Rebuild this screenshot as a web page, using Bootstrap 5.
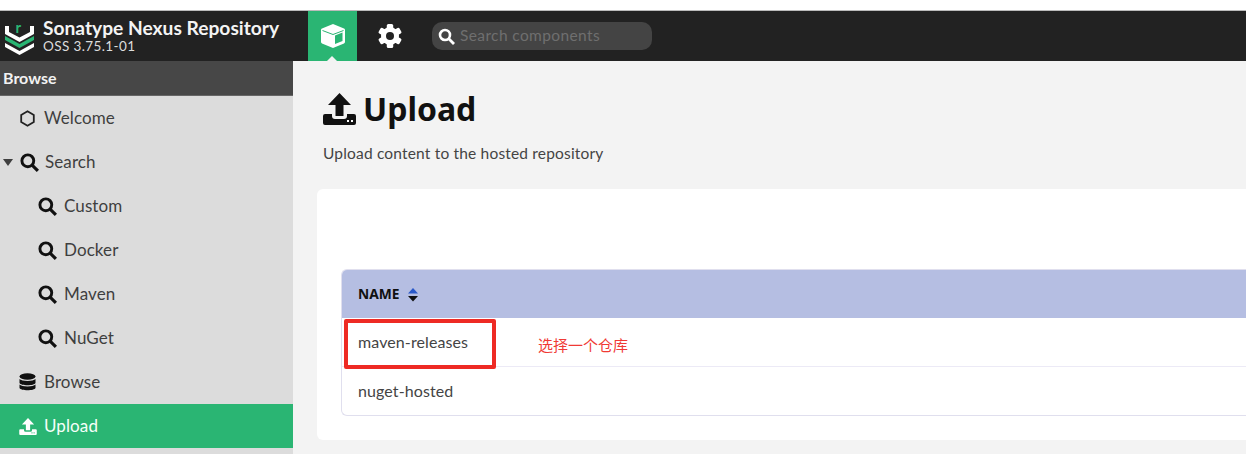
<!doctype html>
<html lang="en">
<head>
<meta charset="utf-8">
<title>Upload</title>
<link rel="stylesheet" href="https://cdn.jsdelivr.net/npm/bootstrap@5.3.0/dist/css/bootstrap.min.css">
<style>
html,body{height:100%;overflow:hidden}
body{background:#fff;font-family:"Lato","Liberation Sans","Noto Sans CJK SC",sans-serif;color:#3f3f3f}
.nx-shell{height:454px;padding-top:10px}
.nx-top{height:51px;background:#222;border-top:1px solid #bbb;color:#fff}
.nx-brand{width:308px;padding-left:5px;gap:9px}
.nx-brand-t{font-size:19.2px;font-weight:700;line-height:20px;color:#f4f4f4}
.nx-brand-s{font-size:13.5px;line-height:16px;letter-spacing:.4px;color:#ddd}
.nx-tab{width:49px;height:50px;background:#2ab573;position:relative}
.nx-tab::after{content:"";position:absolute;left:19px;bottom:0;border:5px solid transparent;border-top:0;border-bottom-color:#f3f3f3}
.nx-gear{width:65px;height:50px}
.nx-search{width:220px;height:28px;background:#444;border-radius:10px;margin-left:10px;padding-left:6px;gap:5px;color:#6f6f6f;font-size:15.5px;letter-spacing:.38px}
.nx-main{height:393px}
.nx-side{width:293px;background:#dcdcdc;flex:none}
.nx-side-h{height:35px;background:#474747;color:#f2f2f2;font-weight:700;font-size:16px;padding-left:3px;border-bottom:1px solid #666}
.nx-item{height:44px;font-size:17px;color:#3f3f3f;letter-spacing:.1px;gap:7px}
.nx-l1{padding-left:19px;gap:8px}
.nx-l1c{padding-left:3px}
.nx-l2{padding-left:38px}
.nx-on{background:#2ab573;color:#f6fff9;gap:7px}
.nx-caret{width:0;height:0;border:5px solid transparent;border-top:7px solid #3f3f3f;border-bottom:0}
.nx-gap6{margin-left:-1px}
.nx-content{background:#f3f3f3;min-width:0}
.nx-head{padding:28px 0 0 30px;height:128px}
.nx-h1{font-family:"Noto Sans","Open Sans",sans-serif;font-weight:700;font-size:32px;line-height:40px;color:#111;margin:0;gap:7px}
.nx-sub{font-size:15.5px;color:#444;margin-top:14px;line-height:20px;letter-spacing:.18px}
.nx-panel{background:#fff;margin-left:24px;height:251px;border-radius:6px 0 0 6px;padding:80px 0 0 24px}
.nx-table{border:1px solid #e0dfee;border-right:0;border-radius:6px 0 0 6px;overflow:hidden;height:147px}
.nx-th{height:48px;background:#b5bee2;padding:1px 0 0 16px;gap:8px;font-family:"Noto Sans",sans-serif;font-weight:700;font-size:13.8px;color:#111}
.nx-row{height:49px;padding-left:16px;font-size:16px;color:#444;letter-spacing:.1px;border-bottom:1px solid #eceaf6}
.nx-row:last-child{border-bottom:0;height:48px}
.nx-wrap{position:relative}
.nx-mark{position:absolute;left:51px;top:258px;width:152px;height:50px;border:4px solid #ee2a24;border-radius:2px}
.nx-note{position:absolute;left:245px;top:274px;font-family:"Noto Sans CJK SC",sans-serif;font-size:15px;line-height:20px;color:#f03a35}
</style>
</head>
<body>
<div class="nx-shell d-flex flex-column">
  <header class="nx-top d-flex align-items-center flex-shrink-0">
    <div class="nx-brand d-flex align-items-center">
      <svg width="29" height="38" viewBox="0 -8 29 38" aria-hidden="true"><text x="10.500" y="8" font-family="Lato,sans-serif" font-size="15" font-weight="700" fill="#2ab573">r</text><path d="M0 1h4v6l10.500 5.500L25 7V1h4v8l-14.500 8L0 9z" fill="#fff"/><path d="M0 11l14.500 8L29 11v4l-14.500 8L0 15z" fill="#2ab573"/><path d="M0 18l14.500 8L29 18v4l-14.500 8L0 22z" fill="#fff"/></svg>
      <div>
        <div class="nx-brand-t">Sonatype Nexus Repository</div>
        <div class="nx-brand-s">OSS 3.75.1-01</div>
      </div>
    </div>
    <div class="nx-tab d-flex align-items-center justify-content-center">
      <svg width="26" height="26" viewBox="0 0 26 26" aria-hidden="true"><path d="M13 1l11 4.500a1.500 1.500 0 0 1 1 1.400V19a1.500 1.500 0 0 1-1 1.400L13 25 2 20.400A1.500 1.500 0 0 1 1 19V6.900a1.500 1.500 0 0 1 1-1.400z" fill="#fff"/><path d="M15 12.500l7.500-3v8.500L15 21z" fill="#2ab573"/><path d="M2.500 7.500L13 11.500 23.500 7.500" fill="none" stroke="#2ab573" stroke-width="1"/></svg>
    </div>
    <div class="nx-gear d-flex align-items-center justify-content-center">
      <svg width="24" height="24" viewBox="-12 -12 24 24" aria-hidden="true"><circle r="9" fill="#fff"/><rect x="-3.200" y="-12" width="6.400" height="24" rx="1.500" fill="#fff"/><rect x="-3.200" y="-12" width="6.400" height="24" rx="1.500" fill="#fff" transform="rotate(60)"/><rect x="-3.200" y="-12" width="6.400" height="24" rx="1.500" fill="#fff" transform="rotate(120)"/><circle r="4" fill="#222"/></svg>
    </div>
    <div class="nx-search d-flex align-items-center">
      <svg width="17" height="17" viewBox="0 0 17 17" aria-hidden="true"><circle cx="7" cy="7" r="5" fill="none" stroke="#fff" stroke-width="2.600"/><path d="M10.800 10.800L16 16" stroke="#fff" stroke-width="2.800"/></svg>
      <span>Search components</span>
    </div>
  </header>
  <div class="nx-main d-flex">
    <aside class="nx-side d-flex flex-column">
      <div class="nx-side-h d-flex align-items-center">Browse</div>
      <div class="nx-item nx-l1 d-flex align-items-center"><svg width="17" height="17" viewBox="0 0 17 17" aria-hidden="true"><path d="M8.500 1.300l6.300 3.600v7.200l-6.300 3.600-6.300-3.600V4.900z" fill="none" stroke="#222" stroke-width="1.800"/></svg>Welcome</div>
      <div class="nx-item nx-l1c d-flex align-items-center"><span class="nx-caret"></span><svg width="19" height="19" viewBox="0 0 17 17" aria-hidden="true"><circle cx="7" cy="7" r="5.300" fill="none" stroke="#111" stroke-width="2.600"/><path d="M10.800 10.800L16 16" stroke="#111" stroke-width="2.800"/></svg><span class="nx-gap6">Search</span></div>
      <div class="nx-item nx-l2 d-flex align-items-center"><svg width="19" height="19" viewBox="0 0 17 17" aria-hidden="true"><circle cx="7" cy="7" r="5.300" fill="none" stroke="#111" stroke-width="2.600"/><path d="M10.800 10.800L16 16" stroke="#111" stroke-width="2.800"/></svg>Custom</div>
      <div class="nx-item nx-l2 d-flex align-items-center"><svg width="19" height="19" viewBox="0 0 17 17" aria-hidden="true"><circle cx="7" cy="7" r="5.300" fill="none" stroke="#111" stroke-width="2.600"/><path d="M10.800 10.800L16 16" stroke="#111" stroke-width="2.800"/></svg>Docker</div>
      <div class="nx-item nx-l2 d-flex align-items-center"><svg width="19" height="19" viewBox="0 0 17 17" aria-hidden="true"><circle cx="7" cy="7" r="5.300" fill="none" stroke="#111" stroke-width="2.600"/><path d="M10.800 10.800L16 16" stroke="#111" stroke-width="2.800"/></svg>Maven</div>
      <div class="nx-item nx-l2 d-flex align-items-center"><svg width="19" height="19" viewBox="0 0 17 17" aria-hidden="true"><circle cx="7" cy="7" r="5.300" fill="none" stroke="#111" stroke-width="2.600"/><path d="M10.800 10.800L16 16" stroke="#111" stroke-width="2.800"/></svg>NuGet</div>
      <div class="nx-item nx-l1 d-flex align-items-center"><svg width="17" height="18" viewBox="0 0 17 18" aria-hidden="true"><ellipse cx="8.500" cy="3.500" rx="8" ry="3.300" fill="#111"/><path d="M.5 6c2 2.500 14 2.500 16 0v4c-1 3-15 3-16 0zM.5 11.500c2 2.500 14 2.500 16 0V15c-1 3-15 3-16 0z" fill="#111"/></svg>Browse</div>
      <div class="nx-item nx-l1 nx-on d-flex align-items-center"><svg width="18" height="17" viewBox="0 0 33 32" aria-hidden="true"><path d="M16.500 0L28 12h-7.500v11h-8V12H5zM0 23a2 2 0 0 1 2-2h7v2a3 3 0 0 0 3 3h9a3 3 0 0 0 3-3v-2h7a2 2 0 0 1 2 2v7a2 2 0 0 1-2 2H2a2 2 0 0 1-2-2z" fill="#fff"/><rect x="23" y="27" width="2" height="2" fill="#2ab573"/><rect x="27" y="27" width="2" height="2" fill="#2ab573"/></svg>Upload</div>
    </aside>
    <main class="nx-content flex-grow-1 nx-wrap">
      <div class="nx-head">
        <h1 class="nx-h1 d-flex align-items-center"><svg width="33" height="32" viewBox="0 0 33 32" aria-hidden="true"><path d="M16.500 0L28 12h-7.500v11h-8V12H5zM0 23a2 2 0 0 1 2-2h7v2a3 3 0 0 0 3 3h9a3 3 0 0 0 3-3v-2h7a2 2 0 0 1 2 2v7a2 2 0 0 1-2 2H2a2 2 0 0 1-2-2z" fill="#111"/><rect x="24" y="27" width="2" height="2" fill="#fff"/><rect x="28" y="27" width="2" height="2" fill="#fff"/></svg>Upload</h1>
        <p class="nx-sub mb-0">Upload content to the hosted repository</p>
      </div>
      <section class="nx-panel">
        <div class="nx-table">
          <div class="nx-th d-flex align-items-center">NAME
            <svg width="10" height="14" viewBox="0 0 10 14" aria-hidden="true"><path d="M5 0l5 5.500H0z" fill="#2a59c8"/><path d="M0 8h10l-5 5.500z" fill="#111"/></svg>
          </div>
          <div class="nx-row d-flex align-items-center">maven-releases</div>
          <div class="nx-row d-flex align-items-center">nuget-hosted</div>
        </div>
      </section>
      <div class="nx-mark"></div>
      <div class="nx-note">选择一个仓库</div>
    </main>
  </div>
</div>
</body>
</html>
